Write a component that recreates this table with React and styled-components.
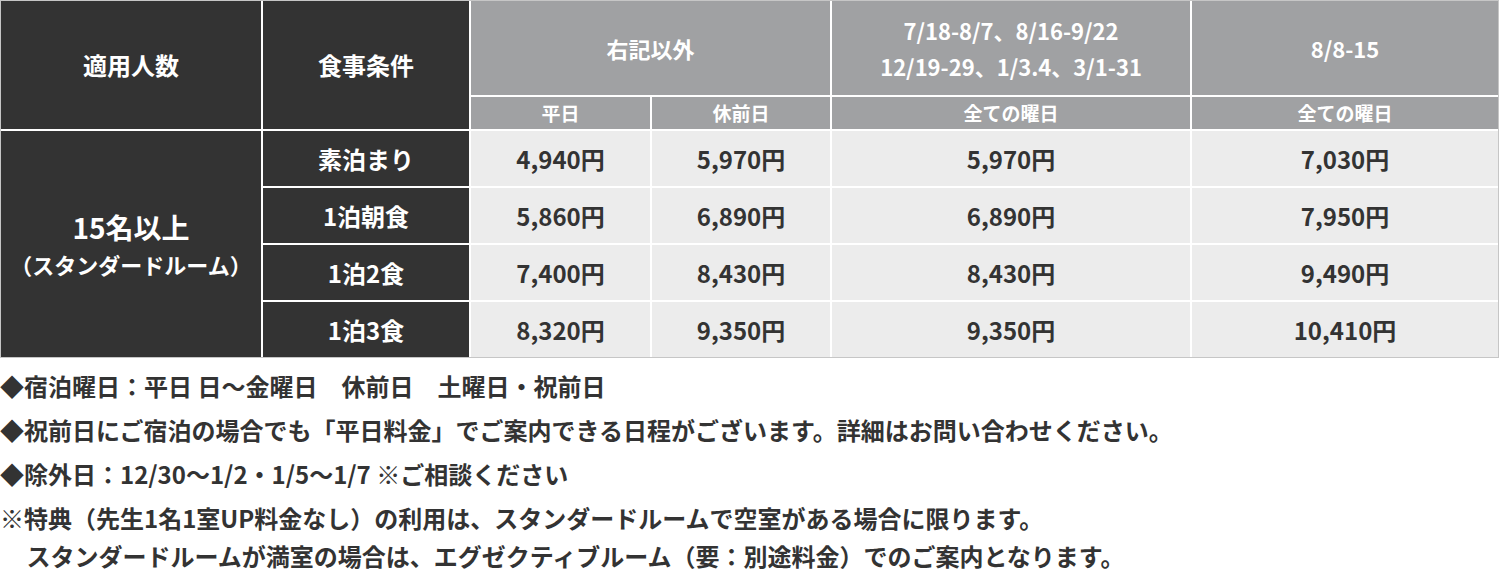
import React from "react";
import styled, { createGlobalStyle } from "styled-components";

const GlobalStyle = createGlobalStyle`
  body {
    margin: 0;
    background: #fff;
    font-family: "Noto Sans CJK JP", "Noto Sans", sans-serif;
    color: #333;
  }
`;

const Page = styled.div`
  width: 1500px;
`;

const TableFrame = styled.div`
  width: 1497px;
  border: 1px solid #c6c6c6;
`;

const Table = styled.table`
  width: 100%;
  table-layout: fixed;
  border-collapse: collapse;
  border-style: hidden;
`;

const Row = styled.tr`
  height: ${(p) => p.h}px;
`;

const DarkCell = styled.td`
  background: #333;
  color: #fff;
  font-weight: 700;
  font-size: ${(p) => p.size || 24}px;
  text-align: center;
  vertical-align: middle;
  border: 2px solid #fff;
  padding: 0;
  line-height: 1.4;
`;

const HeadCell = styled.th`
  background: #a0a1a3;
  color: #fff;
  font-weight: 700;
  font-size: ${(p) => p.size || 22}px;
  line-height: ${(p) => p.lh || 1.4};
  text-align: center;
  vertical-align: middle;
  border: 2px solid #fff;
  padding: 0;
`;

const PriceCell = styled.td`
  background: #ececec;
  color: #333;
  font-weight: 700;
  font-size: 24px;
  text-align: center;
  vertical-align: middle;
  border: 2px solid #fff;
  padding: 0;
`;

const Sub = styled.span`
  display: block;
  font-size: 22px;
  margin-top: 2px;
`;

const Notes = styled.div`
  padding-top: 9px;
  font-weight: 700;
  font-size: 24px;
  color: #333;
`;

const Note = styled.p`
  margin: 0 0 6px;
  line-height: 38px;
`;

const Indent = styled.span`
  display: block;
  padding-left: 1.1em;
`;

const rows = [
  ["素泊まり", "4,940円", "5,970円", "5,970円", "7,030円"],
  ["1泊朝食", "5,860円", "6,890円", "6,890円", "7,950円"],
  ["1泊2食", "7,400円", "8,430円", "8,430円", "9,490円"],
  ["1泊3食", "8,320円", "9,350円", "9,350円", "10,410円"],
];

export default function App() {
  return (
    <Page>
      <GlobalStyle />
      <TableFrame>
        <Table>
          <colgroup>
            <col style={{ width: 261 }} />
            <col style={{ width: 208 }} />
            <col style={{ width: 181 }} />
            <col style={{ width: 180 }} />
            <col style={{ width: 360 }} />
            <col style={{ width: 307 }} />
          </colgroup>
          <tbody>
            <Row h={95}>
              <DarkCell rowSpan={2}>適用人数</DarkCell>
              <DarkCell rowSpan={2}>食事条件</DarkCell>
              <HeadCell colSpan={2}>右記以外</HeadCell>
              <HeadCell lh={1.65}>
                7/18-8/7、8/16-9/22
                <br />
                12/19-29、1/3.4、3/1-31
              </HeadCell>
              <HeadCell>8/8-15</HeadCell>
            </Row>
            <Row h={34}>
              <HeadCell size={19}>平日</HeadCell>
              <HeadCell size={19}>休前日</HeadCell>
              <HeadCell size={19}>全ての曜日</HeadCell>
              <HeadCell size={19}>全ての曜日</HeadCell>
            </Row>
            {rows.map((r, i) => (
              <Row key={r[0]} h={i === 3 ? 56 : 57}>
                {i === 0 && (
                  <DarkCell rowSpan={4} size={28}>
                    15名以上
                    <Sub>（スタンダードルーム）</Sub>
                  </DarkCell>
                )}
                <DarkCell>{r[0]}</DarkCell>
                {r.slice(1).map((v, j) => (
                  <PriceCell key={j}>{v}</PriceCell>
                ))}
              </Row>
            ))}
          </tbody>
        </Table>
      </TableFrame>
      <Notes>
        <Note>◆宿泊曜日：平日 日〜金曜日　休前日　土曜日・祝前日</Note>
        <Note>
          ◆祝前日にご宿泊の場合でも「平日料金」でご案内できる日程がございます。詳細はお問い合わせください。
        </Note>
        <Note>◆除外日：12/30〜1/2・1/5〜1/7 ※ご相談ください</Note>
        <Note>
          ※特典（先生1名1室UP料金なし）の利用は、スタンダードルームで空室がある場合に限ります。
          <Indent>
            スタンダードルームが満室の場合は、エグゼクティブルーム（要：別途料金）でのご案内となります。
          </Indent>
        </Note>
      </Notes>
    </Page>
  );
}
